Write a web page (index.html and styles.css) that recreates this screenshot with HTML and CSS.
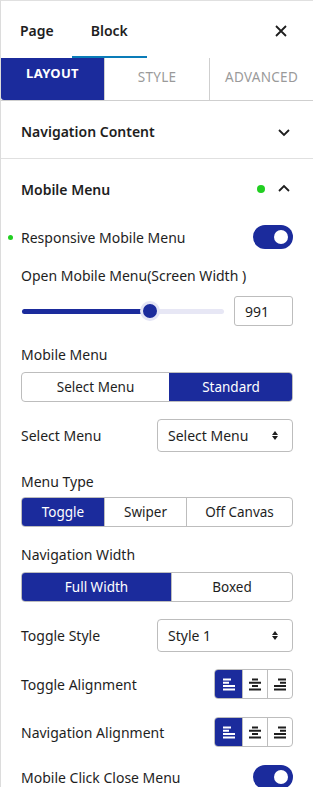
FILE: index.html
```html
<!DOCTYPE html>
<html>
<head>
<meta charset="utf-8">
<link rel="stylesheet" href="styles.css">
</head>
<body>
<div class="panel">
  <div class="top">
    <div class="toptab">Page</div>
    <div class="toptab active">Block</div>
    <div class="close">
      <svg width="14" height="14" viewBox="0 0 14 14"><path d="M2 2 L12 12 M12 2 L2 12" stroke="#1e1e1e" stroke-width="1.8" fill="none"/></svg>
    </div>
  </div>
  <div class="tabs">
    <div class="tab on">LAYOUT</div>
    <div class="tab">STYLE</div>
    <div class="tab">ADVANCED</div>
  </div>
  <div class="sec closed">
    <div class="sec-head first">
      <span>Navigation Content</span>
      <svg class="chev" width="14" height="10" viewBox="0 0 14 10"><path d="M2 3 L7 8 L12 3" stroke="#1e1e1e" stroke-width="1.8" fill="none"/></svg>
    </div>
  </div>
  <div class="sec">
    <div class="sec-head open">
      <span>Mobile Menu</span>
      <span class="right"><span class="gdot"></span>
      <svg class="chev" width="14" height="10" viewBox="0 0 14 10"><path d="M2 7 L7 2 L12 7" stroke="#1e1e1e" stroke-width="1.8" fill="none"/></svg></span>
    </div>
    <div class="body">
      <div class="row r-resp">
        <span class="lbl"><span class="sdot"></span>Responsive Mobile Menu</span>
        <span class="toggle"><span class="knob"></span></span>
      </div>
      <div class="label l-open">Open Mobile Menu(Screen Width )</div>
      <div class="row r-slider">
        <div class="slider">
          <div class="fill"></div>
          <div class="thumb"></div>
        </div>
        <div class="num">991</div>
      </div>
      <div class="label l-mm">Mobile Menu</div>
      <div class="group g-mm">
        <div class="opt w148">Select Menu</div>
        <div class="opt sel grow">Standard</div>
      </div>
      <div class="row r-select s1">
        <span class="lbl">Select Menu</span>
        <div class="select"><span>Select Menu</span><span class="arrows"></span></div>
      </div>
      <div class="label l-mt">Menu Type</div>
      <div class="group g-mt">
        <div class="opt sel w83">Toggle</div>
        <div class="opt w81">Swiper</div>
        <div class="opt grow">Off Canvas</div>
      </div>
      <div class="label l-nw">Navigation Width</div>
      <div class="group g-nw">
        <div class="opt sel w150">Full Width</div>
        <div class="opt grow">Boxed</div>
      </div>
      <div class="row r-select s2">
        <span class="lbl">Toggle Style</span>
        <div class="select"><span>Style 1</span><span class="arrows"></span></div>
      </div>
      <div class="row r-align a1">
        <span class="lbl">Toggle Alignment</span>
        <div class="agroup">
          <div class="acell sel"><svg width="14" height="13" viewBox="0 0 14 13"><path d="M1 1.5h8M1 4.8h6M1 8.1h12M1 11.4h12" stroke="#fff" stroke-width="2"/></svg></div>
          <div class="acell"><svg width="14" height="13" viewBox="0 0 14 13"><path d="M4 1.5h6M1 4.8h12M4 8.1h6M1 11.4h12" stroke="#1e1e1e" stroke-width="2"/></svg></div>
          <div class="acell"><svg width="14" height="13" viewBox="0 0 14 13"><path d="M5 1.5h8M7 4.8h6M1 8.1h12M1 11.4h12" stroke="#1e1e1e" stroke-width="2"/></svg></div>
        </div>
      </div>
      <div class="row r-align a2">
        <span class="lbl">Navigation Alignment</span>
        <div class="agroup">
          <div class="acell sel"><svg width="14" height="13" viewBox="0 0 14 13"><path d="M1 1.5h8M1 4.8h6M1 8.1h12M1 11.4h12" stroke="#fff" stroke-width="2"/></svg></div>
          <div class="acell"><svg width="14" height="13" viewBox="0 0 14 13"><path d="M4 1.5h6M1 4.8h12M4 8.1h6M1 11.4h12" stroke="#1e1e1e" stroke-width="2"/></svg></div>
          <div class="acell"><svg width="14" height="13" viewBox="0 0 14 13"><path d="M5 1.5h8M7 4.8h6M1 8.1h12M1 11.4h12" stroke="#1e1e1e" stroke-width="2"/></svg></div>
        </div>
      </div>
      <div class="row r-resp r-last">
        <span class="lbl">Mobile Click Close Menu</span>
        <span class="toggle"><span class="knob"></span></span>
      </div>
    </div>
  </div>
</div>
</body>
</html>
```

FILE: styles.css
```css
* { box-sizing: border-box; }
html, body { margin: 0; padding: 0; background: #fff; }
body {
  width: 313px;
  height: 787px;
  overflow: hidden;
  font-family: "Noto Sans", "Open Sans", sans-serif;
  color: #1e1e1e;
  font-size: 14px;
}
.panel {
  border-left: 1px solid #dcdcdc;
  border-top: 1px solid #e0e0e0;
  min-height: 787px;
}
.top {
  display: flex;
  align-items: stretch;
  height: 57px;
}
.toptab {
  padding: 0 19px;
  display: flex;
  align-items: center;
  font-size: 14px;
  font-weight: 600;
  border-bottom: 2px solid transparent;
  padding-top: 3px;
}
.toptab:first-child { padding-left: 19px; padding-right: 18px; }
.toptab.active { border-bottom-color: #0a7cb8; }
.close {
  margin-left: auto;
  width: 58px;
  display: flex;
  align-items: center;
  justify-content: center;
  padding-right: 6px;
  padding-top: 2px;
}
.tabs {
  display: flex;
  height: 43px;
  border-bottom: 1px solid #cfcfcf;
}
.tab {
  flex: 1;
  display: flex;
  align-items: center;
  justify-content: center;
  font-size: 13.5px;
  color: #9a9a9a;
  letter-spacing: 0.3px;
  border-left: 1px solid #cfcfcf;
  padding-bottom: 4px;
}
.tab.on {
  background: #1b2b9c;
  color: #fff;
  font-weight: 700;
  border-left: 0;
  border-bottom-left-radius: 3px;
  padding-top: 0;
  padding-bottom: 12px;
  flex: 0 0 103px;
  font-size: 13px;
}
.tab:nth-child(2) { flex: 0 0 105px; }
.sec-head {
  display: flex;
  align-items: center;
  justify-content: space-between;
  padding: 0 22px 0 20px;
  font-size: 14px;
  font-weight: 600;
  height: 57px;
}
.sec-head.first { padding-top: 4px; }
.closed { border-bottom: 1px solid #e0e0e0; }
.sec-head.open { height: 61px; padding-bottom: 1px; }
.right { display: flex; align-items: center; gap: 12px; }
.gdot { width: 8px; height: 8px; border-radius: 50%; background: #21cf21; }
.chev { display: block; }
.body { padding: 0 20px 0 20px; }
.row {
  display: flex;
  align-items: center;
  justify-content: space-between;
}
.lbl { font-size: 14px; display: flex; align-items: center; position: relative; }
.sdot {
  position: absolute;
  left: -13px;
  top: 50%;
  margin-top: -2.5px;
  width: 5px; height: 5px; border-radius: 50%; background: #21cf21;
}
.r-resp { height: 24px; margin-top: 5px; }
.toggle {
  width: 40px; height: 24px; border-radius: 12px; background: #1b2b9c;
  position: relative;
}
.knob {
  position: absolute; right: 5px; top: 5px;
  width: 14px; height: 14px; border-radius: 50%; background: #fff;
}
.label { font-size: 14px; height: 20px; line-height: 20px; }
.l-open { margin-top: 17px; }
.r-slider { margin-top: 10px; height: 30px; }
.slider {
  width: 202px; height: 5px; border-radius: 3px; background: #e7e7f5;
  position: relative; margin-left: 1px;
}
.fill { width: 125px; height: 5px; border-radius: 3px; background: #1b2b9c; }
.thumb {
  position: absolute; left: 118px; top: -7.5px;
  width: 20px; height: 20px; border-radius: 50%;
  background: #1b2b9c; border: 3px solid #e4e5f5;
}
.num {
  width: 59px; height: 30px; border: 1px solid #bdbdbd; border-radius: 3px;
  display: flex; align-items: center; padding-left: 10px; font-size: 14px;
}
.l-mm { margin-top: 19px; }
.group {
  display: flex; height: 30px; border: 1px solid #bdbdbd; border-radius: 4px;
  overflow: hidden; margin-top: 7px;
}
.opt {
  display: flex; align-items: center; justify-content: center;
  font-size: 13.5px; border-left: 1px solid #bdbdbd;
}
.opt:first-child { border-left: 0; }
.opt.sel { background: #1b2b9c; color: #fff; border-color: #1b2b9c; }
.grow { flex: 1; }
.w148 { width: 147px; }
.w83 { width: 82px; }
.w81 { width: 82px; }
.w150 { width: 149px; }
.r-select { height: 33px; margin-top: 17px; }
.select {
  width: 136px; height: 33px; border: 1px solid #bdbdbd; border-radius: 4px;
  display: flex; align-items: center; justify-content: space-between;
  padding: 0 13px 0 10px; font-size: 14px;
}
.arrows {
  width: 7px; height: 9px; position: relative;
}
.arrows::before, .arrows::after {
  content: ""; position: absolute; left: 0;
  border-left: 3.5px solid transparent; border-right: 3.5px solid transparent;
}
.arrows::before { top: 0; border-bottom: 4px solid #1e1e1e; }
.arrows::after { bottom: 0; border-top: 4px solid #1e1e1e; }
.l-mt { margin-top: 20px; }
.g-mt { margin-top: 5px; }
.l-nw { margin-top: 18px; }
.g-nw { margin-top: 7px; }
.s2 { margin-top: 17px; }
.r-align { height: 30px; margin-top: 17px; }
.a2 { margin-top: 18px; }
.agroup {
  display: flex; height: 30px; border: 1px solid #bdbdbd; border-radius: 4px; overflow: hidden;
}
.acell {
  width: 25px; display: flex; align-items: center; justify-content: center;
  border-left: 1px solid #bdbdbd;
}
.acell:first-child { border-left: 0; width: 27px; }
.acell.sel { background: #1b2b9c; }
.r-last { margin-top: 18px; }
```
